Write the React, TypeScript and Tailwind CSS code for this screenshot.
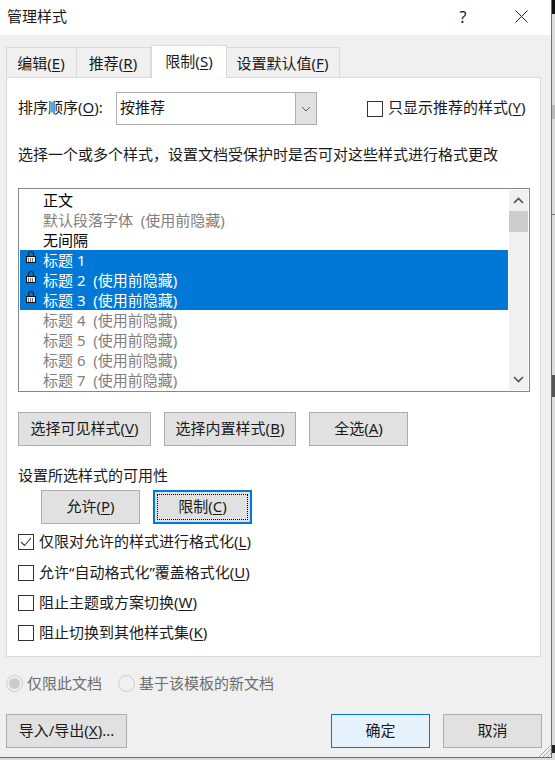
import React from 'react';

const font = { fontFamily: '"Noto Sans", "Noto Sans CJK SC", sans-serif' };

// one hot-key label, e.g. 编辑(E) with the letter underlined
function Hot({ text, k, tail = '' }: { text: string; k: string; tail?: string }) {
  return (
    <span className="whitespace-nowrap">
      {text}(<span className="underline underline-offset-2">{k}</span>){tail}
    </span>
  );
}

function Tab({ text, k, active, width }: { text: string; k: string; active?: boolean; width: string }) {
  return active ? (
    <div className={`${width} h-[33px] -mt-[2px] -mb-px z-10 bg-white border border-[#d9d9d9] border-b-0 flex items-center justify-center pb-[2px]`}>
      <Hot text={text} k={k} />
    </div>
  ) : (
    <div className={`${width} h-[30px] bg-[#f0f0f0] border border-l-0 first:border-l border-[#d9d9d9] border-b-0 flex items-center justify-center pt-px pr-px`}>
      <Hot text={text} k={k} />
    </div>
  );
}

function Lock() {
  return (
    <svg width="10" height="12" viewBox="0 0 10 12" className="shrink-0 -mt-[6px]">
      <path d="M2.5 6V3a2.5 2.5 0 0 1 5 0V6" fill="none" stroke="#222" strokeWidth="1.2" />
      <rect x="0.5" y="5.5" width="9" height="6" fill="#eeeeee" stroke="#111" />
      <path d="M2 8h6M2 10h6" stroke="#111" strokeWidth="1" strokeDasharray="1 1" />
    </svg>
  );
}

function Row({ name, num, hidden, selected, dim }: { name: string; num?: string; hidden?: boolean; selected?: boolean; dim?: boolean }) {
  const color = selected ? 'bg-[#0078d7] text-white' : dim ? 'text-[#808080]' : 'text-black';
  return (
    <div className={`h-[20px] flex items-center ${color}`}>
      <div className="w-[23px] pl-[6px] flex items-center">{selected && <Lock />}</div>
      <span className="whitespace-pre leading-[20px] pb-px">
        {name}
        {num ? ` ${num}` : ''}
        {hidden ? '  (使用前隐藏)' : ''}
      </span>
    </div>
  );
}

function Btn({ children, width }: { children: React.ReactNode; width: string }) {
  return (
    <div className={`${width} h-[34px] bg-[#e1e1e1] border border-[#adadad] flex items-center justify-center pb-[2px]`}>
      {children}
    </div>
  );
}

function Check({ checked, children }: { checked?: boolean; children: React.ReactNode }) {
  return (
    <div className="h-[16px] flex items-center gap-[5px]">
      <div className="w-[16px] h-[16px] bg-white border border-[#333] flex items-center justify-center shrink-0">
        {checked && (
          <svg width="12" height="10" viewBox="0 0 12 10">
            <path d="M1 5l3.5 3.5L11 1" fill="none" stroke="#333" strokeWidth="1.1" />
          </svg>
        )}
      </div>
      <div className="pb-[2px]">{children}</div>
    </div>
  );
}

function Radio({ on, children }: { on?: boolean; children: React.ReactNode }) {
  return (
    <div className="flex items-center gap-[4px] text-[#6d6d6d]">
      <div className="w-[17px] h-[17px] rounded-full border border-[#cccccc] flex items-center justify-center shrink-0">
        {on && <div className="w-[11px] h-[11px] rounded-full bg-[#cccccc]" />}
      </div>
      {children}
    </div>
  );
}

export default function App() {
  return (
    <div className="relative w-[555px] h-[760px] bg-[#dcdcdc] overflow-hidden text-[15px] text-[#1a1a1a]" style={font}>
      <div className="w-[552px] h-[758px] border-r border-b border-[#6e6e6e] bg-[#f0f0f0] flex flex-col">
        {/* Title bar */}
        <div className="h-[35px] bg-white flex items-center justify-between shrink-0">
          <span className="pl-[7px] pb-[2px]">管理样式</span>
          <div className="flex items-center pb-[2px]">
            <span className="w-[20px] text-center text-[16px] mr-[42px] -ml-[2px]">?</span>
            <svg width="13" height="13" viewBox="0 0 13 13" className="mr-[23px]">
              <path d="M0.5 0.5l12 12M12.5 0.5l-12 12" stroke="#222" strokeWidth="1" />
            </svg>
          </div>
        </div>

        {/* Tabs */}
        <div className="flex items-start pl-[6px] pt-[12px] shrink-0">
          <Tab text="编辑" k="E" width="w-[71px]" />
          <Tab text="推荐" k="R" width="w-[74px]" />
          <Tab text="限制" k="S" active width="w-[76px]" />
          <Tab text="设置默认值" k="F" width="w-[113px]" />
        </div>

        {/* Tab page */}
        <div className="ml-[6px] w-[535px] h-[580px] bg-white border border-[#d9d9d9] shrink-0 pl-[11px] pt-[14px]">
          <div className="flex items-center h-[33px]">
            <div className="w-[98px] pb-[2px]">
              <Hot text="排序顺序" k="O" tail=":" />
            </div>
            <div className="w-[201px] h-[33px] border border-[#adadad] flex items-stretch">
              <span className="flex-1 pl-[3px] pb-[2px] flex items-center">按推荐</span>
              <div className="w-[21px] bg-[#e1e1e1] border-l border-[#adadad] flex items-center justify-center">
                <svg width="10" height="6" viewBox="0 0 10 6">
                  <path d="M1 1l4 4 4-4" fill="none" stroke="#555" strokeWidth="1" />
                </svg>
              </div>
            </div>
            <div className="ml-[50px]">
              <Check>
                <Hot text="只显示推荐的样式" k="Y" />
              </Check>
            </div>
          </div>

          <p className="mt-[18px] h-[22px] leading-[22px] whitespace-nowrap">选择一个或多个样式，设置文档受保护时是否可对这些样式进行格式更改</p>

          {/* Style list */}
          <div className="mt-[23px] w-[512px] h-[204px] border border-[#828790] flex pl-px pt-px overflow-hidden">
            <div className="w-[488px] shrink-0 overflow-hidden">
              <Row name="正文" />
              <Row name="默认段落字体" hidden dim />
              <Row name="无间隔" />
              <Row name="标题" num="1" selected />
              <Row name="标题" num="2" hidden selected />
              <Row name="标题" num="3" hidden selected />
              <Row name="标题" num="4" hidden dim />
              <Row name="标题" num="5" hidden dim />
              <Row name="标题" num="6" hidden dim />
              <Row name="标题" num="7" hidden dim />
            </div>
            <div className="ml-px w-[19px] h-[200px] bg-[#f0f0f0] flex flex-col items-center justify-between">
              <div className="w-full">
                <div className="h-[21px] flex items-center justify-center">
                  <svg width="11" height="7" viewBox="0 0 11 7">
                    <path d="M1 6l4.5-4.5L10 6" fill="none" stroke="#505050" strokeWidth="1.6" />
                  </svg>
                </div>
                <div className="h-[21px] bg-[#cdcdcd]" />
              </div>
              <div className="h-[21px] flex items-center justify-center">
                <svg width="11" height="7" viewBox="0 0 11 7">
                  <path d="M1 1l4.5 4.5L10 1" fill="none" stroke="#505050" strokeWidth="1.6" />
                </svg>
              </div>
            </div>
          </div>

          <div className="mt-[20px] flex gap-[13px]">
            <Btn width="w-[133px]"><Hot text="选择可见样式" k="V" /></Btn>
            <Btn width="w-[132px]"><Hot text="选择内置样式" k="B" /></Btn>
            <Btn width="w-[99px]"><Hot text="全选" k="A" /></Btn>
          </div>

          <div className="mt-[18px] h-[22px] leading-[22px]">设置所选样式的可用性</div>

          <div className="mt-[4px] pl-[23px] flex gap-[13px]">
            <Btn width="w-[99px]"><Hot text="允许" k="P" /></Btn>
            <div className="w-[99px] h-[34px] bg-[#e1e1e1] border-2 border-[#0078d7] flex items-center justify-center">
              <div className="w-[91px] h-[26px] border border-dotted border-black flex items-center justify-center pb-[2px]">
                <Hot text="限制" k="C" />
              </div>
            </div>
          </div>

          <div className="mt-[10px] flex flex-col gap-[14px]">
            <div className="mb-px">
              <Check checked><Hot text="仅限对允许的样式进行格式化" k="L" /></Check>
            </div>
            <Check><Hot text="允许“自动格式化”覆盖格式化" k="U" /></Check>
            <Check><Hot text="阻止主题或方案切换" k="W" /></Check>
            <Check><Hot text="阻止切换到其他样式集" k="K" /></Check>
          </div>
        </div>

        {/* Template scope */}
        <div className="ml-[6px] mt-[16px] h-[20px] flex items-center gap-[16px] shrink-0">
          <Radio on>仅限此文档</Radio>
          <Radio>基于该模板的新文档</Radio>
        </div>

        {/* Footer buttons */}
        <div className="ml-[6px] mt-[21px] flex shrink-0">
          <Btn width="w-[121px]"><Hot text="导入/导出" k="X" tail="..." /></Btn>
          <div className="ml-[204px] w-[99px] h-[34px] bg-[#e5f1fb] border border-[#0078d7] flex items-center justify-center pb-[2px]">确定</div>
          <div className="ml-[13px]"><Btn width="w-[99px]">取消</Btn></div>
        </div>
      </div>

      {/* bits of the window behind the dialog, visible along the right edge */}
      <div className="absolute left-[552px] top-0 w-[3px] h-[14px] bg-[#111]" />
      <div className="absolute left-[552px] top-[105px] w-[3px] h-[14px] bg-[#b9b9b9]" />
      <div className="absolute left-[552px] top-[214px] w-[3px] h-px bg-[#777]" />
      <div className="absolute left-[552px] top-[375px] w-[3px] h-[22px] bg-[#555]" />
      <div className="absolute left-[552px] top-[745px] w-[3px] h-[8px] bg-[#222]" />

      {/* resize grip */}
      <svg width="14" height="14" viewBox="0 0 14 14" className="absolute left-[538px] top-[744px]">
        <path d="M13 1L1 13M13 5L5 13M13 9L9 13" stroke="#a8a8a8" strokeWidth="1" />
      </svg>
    </div>
  );
}
